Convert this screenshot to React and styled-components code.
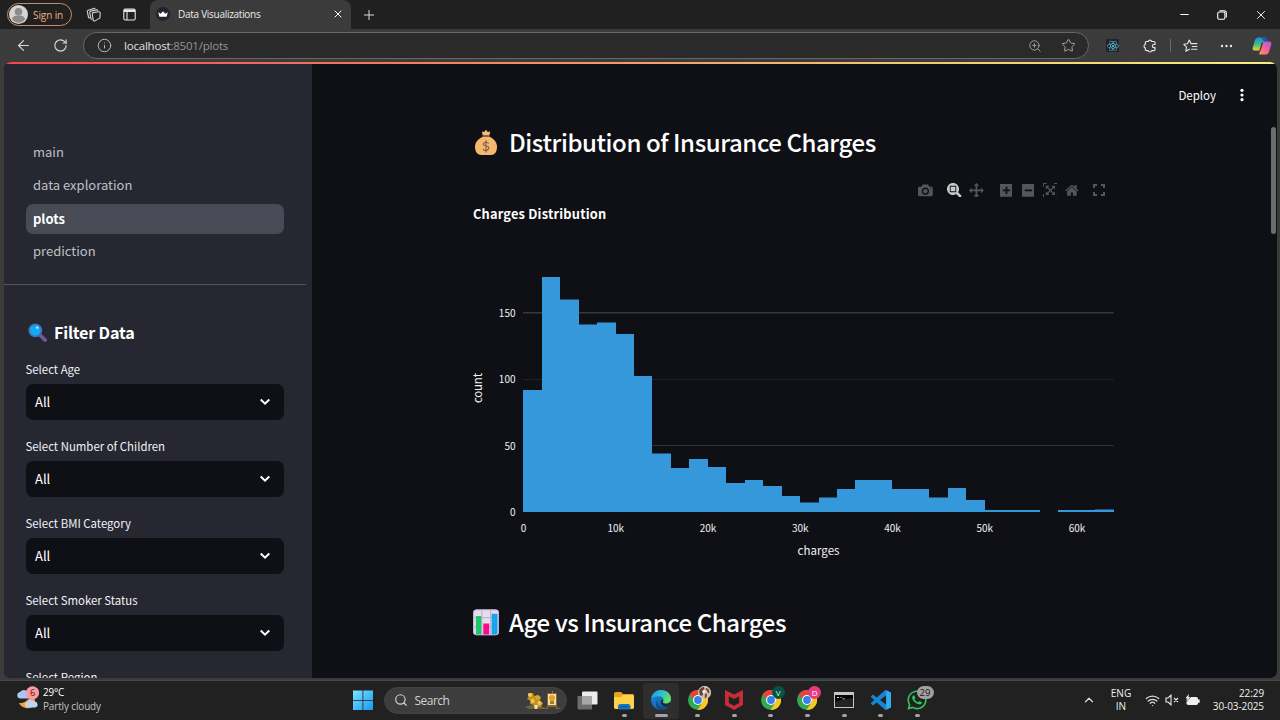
import React from "react";
import styled, { createGlobalStyle } from "styled-components";
import { ArrowLeft, RotateCw, Info, X, Plus, Minus, Star, ZoomIn, Search, ChevronUp, Wifi } from "lucide-react";
import { FaWhatsapp, FaReact } from "react-icons/fa";

const SOURCE = '"Noto Sans CJK JP", "Open Sans", sans-serif';
const SYSTEM = '"Open Sans", "Noto Sans", sans-serif';

const Global = createGlobalStyle`
  * { box-sizing: border-box; }
  body { margin: 0; background: #3b3b3b; overflow: hidden; }
  svg { display: block; flex: none; }
`;

const Screen = styled.div`
  width: 1280px;
  height: 720px;
  display: flex;
  flex-direction: column;
  overflow: hidden;
  background: #3b3b3b;
  font-family: ${SYSTEM};
  color: #fff;
`;

/* ---------- browser chrome ---------- */
const TabStrip = styled.header`
  height: 29px;
  flex: none;
  display: flex;
  align-items: center;
  background: #202020;
`;
const SignIn = styled.div`
  width: 65px;
  height: 23px;
  margin-left: 7px;
  padding-left: 1px;
  display: flex;
  align-items: center;
  gap: 5px;
  border: 1px solid #c78d62;
  border-radius: 12px;
  color: #f0ae80;
  font-size: 10px;
  line-height: 20px;
  letter-spacing: -0.1px;
  white-space: nowrap;
`;
const IconCell = styled.div`
  width: ${(p) => p.$w}px;
  height: 100%;
  flex: none;
  display: flex;
  align-items: center;
  justify-content: center;
  color: ${(p) => p.$color || "#d8d8d8"};
`;
const Tab = styled.div`
  width: 201px;
  height: 29px;
  margin-left: 3px;
  padding: 0 7px 1px 6px;
  display: flex;
  align-items: center;
  background: #3b3b3b;
  border-radius: 8px 8px 0 0;
  font-size: 10px;
`;
const TabTitle = styled.span`
  flex: 1;
  margin-left: 8px;
  letter-spacing: -0.28px;
  color: #ececec;
`;
const WindowButtons = styled.div`
  height: 100%;
  margin-left: auto;
  display: flex;
`;
const Toolbar = styled.div`
  height: 33px;
  flex: none;
  display: flex;
  align-items: center;
  background: #3b3b3b;
`;
const Address = styled.div`
  width: 1006px;
  height: 27px;
  margin-left: 9px;
  display: flex;
  align-items: center;
  background: #2a2a2a;
  border: 1px solid #686868;
  border-radius: 14px;
`;
const Url = styled.span`
  flex: 1;
  padding-bottom: 1px;
  font-size: 11.5px;
  letter-spacing: -0.2px;
  color: #e0e0e0;
  span { color: #959595; }
`;
const Separator = styled.i`
  width: 1px;
  height: 13px;
  background: #6a6a6a;
`;
const ReactTile = styled.span`
  width: 13px;
  height: 13px;
  display: flex;
  align-items: center;
  justify-content: center;
  background: #20242a;
`;

/* ---------- page ---------- */
const Page = styled.div`
  width: 1273px;
  height: 616px;
  margin-left: 4px;
  flex: none;
  display: flex;
  flex-direction: column;
  border-radius: 7px;
  overflow: hidden;
  background: #0f1016;
  font-family: ${SOURCE};
`;
const Rainbow = styled.div`
  height: 2px;
  flex: none;
  background: linear-gradient(90deg, #f2454f, #f58b62 40%, #f6c173 68%, #f7ee83);
`;
const Columns = styled.div`
  flex: 1;
  min-height: 0;
  display: flex;
`;
const Sidebar = styled.aside`
  width: 307.5px;
  flex: none;
  overflow: hidden;
  background: #262730;
`;
const Nav = styled.nav`
  padding: 74px 28px 0 21.5px;
  display: flex;
  flex-direction: column;
  gap: 3.5px;
`;
const NavItem = styled.a`
  height: 29.5px;
  padding-left: 7.5px;
  border-radius: 7px;
  line-height: ${(p) => (p.$active ? 29 : 28.4)}px;
  font-size: 13px;
  font-weight: ${(p) => (p.$active ? 700 : 400)};
  color: ${(p) => (p.$active ? "#fff" : "#bfc0c6")};
  background: ${(p) => (p.$active ? "#484a55" : "transparent")};
`;
const Divider = styled.hr`
  width: 302px;
  height: 1px;
  margin: 17.5px 0 0;
  border: 0;
  background: #53545d;
`;
const FilterTitle = styled.h2`
  height: 26px;
  margin: 34px 0 16px 24px;
  display: flex;
  align-items: center;
  gap: 7px;
  font-size: 16.2px;
  line-height: 26px;
  font-weight: 700;
  letter-spacing: -0.22px;
`;
const Field = styled.div`
  width: 258.5px;
  height: 77px;
  margin-left: 21.5px;
`;
const FieldLabel = styled.label`
  display: block;
  height: 23px;
  font-size: 11.4px;
  line-height: 17px;
  color: #f2f2f4;
`;
const Select = styled.div`
  height: 36px;
  padding: 0 13px 1px 9.5px;
  display: flex;
  align-items: center;
  justify-content: space-between;
  border-radius: 7px;
  background: #0f1016;
  font-size: 13px;
  line-height: 34px;
`;
const Main = styled.main`
  flex: 1;
  min-width: 0;
  padding-left: 161.5px;
`;
const AppHeader = styled.div`
  height: 62px;
  padding: 0 26px 1px 0;
  display: flex;
  align-items: center;
  justify-content: flex-end;
  gap: 23px;
  font-size: 11.5px;
`;
const Heading = styled.h1`
  height: 32px;
  margin: 0;
  display: flex;
  align-items: center;
  gap: 10px;
  font-size: 24px;
  line-height: 32px;
  font-weight: 500;
  letter-spacing: -0.42px;
  white-space: nowrap;
`;
const ModeBar = styled.div`
  width: 637px;
  height: 16px;
  margin-top: 24px;
  display: flex;
  justify-content: flex-end;
  align-items: center;
`;
const ModeGroup = styled.div`
  margin-left: 7.2px;
  display: flex;
  &:last-child { margin-left: 5px; }
`;
const ModeButton = styled.span`
  width: 22px;
  display: flex;
  justify-content: center;
  svg { fill: ${(p) => (p.$on ? "#c9cacc" : "#54565b")}; }
`;
const ChartTitle = styled.h3`
  height: 18px;
  margin: 7px 0 0;
  font-size: 12.8px;
  line-height: 18px;
  letter-spacing: 0.2px;
  font-weight: 700;
`;
const ChartBox = styled.div`
  height: 383px;
  padding-top: 16px;
`;
const ScrollTrack = styled.div`
  width: 6px;
  padding-top: 63px;
`;
const ScrollThumb = styled.div`
  width: 5px;
  height: 107px;
  border-radius: 3px;
  background: #6c6d70;
`;

/* ---------- taskbar ---------- */
const Taskbar = styled.footer`
  height: 40px;
  margin-top: 2px;
  flex: none;
  display: flex;
  align-items: center;
  background: #212121;
  border-top: 1px solid #474747;
`;
const Weather = styled.div`
  width: 345px;
  padding: 0 0 2px 16px;
  display: flex;
  gap: 4px;
`;
const WeatherText = styled.div`
  display: flex;
  flex-direction: column;
  font-size: 9.9px;
  line-height: 14px;
  letter-spacing: -0.1px;
  color: #c4c4c4;
`;
const Temperature = styled.span`
  height: 13px;
  line-height: 13px;
  color: #fff;
  letter-spacing: -0.2px;
`;
const SearchBox = styled.div`
  width: 183px;
  height: 27px;
  margin: 0 3px 1px 2px;
  padding: 0 5px 0 9px;
  display: flex;
  align-items: center;
  border-radius: 14px;
  background: #3d3d3d;
  border: 1px solid #434343;
  font-size: 12px;
  color: #d2d2d2;
  span { flex: 1; margin-left: 7px; letter-spacing: -0.55px; }
`;
const TaskApp = styled.div`
  position: relative;
  width: 36.6px;
  height: 36px;
  padding-bottom: 1px;
  display: flex;
  align-items: center;
  justify-content: center;
  border-radius: 4px;
  background: ${(p) => (p.$active ? "#2e2e2e" : "transparent")};
  &::after {
    content: "";
    display: ${(p) => (p.$idle ? "none" : "block")};
    position: absolute;
    bottom: 2px;
    width: ${(p) => (p.$active ? 13 : 5)}px;
    height: 2.5px;
    border-radius: 2px;
    background: #a3a3a3;
  }
`;
const Badge = styled.span`
  position: absolute;
  top: 3px;
  right: ${(p) => p.$right || 4.5}px;
  width: ${(p) => p.$w || 13}px;
  height: 13px;
  border-radius: 7px;
  background: ${(p) => p.$bg};
  color: ${(p) => p.$fg || "#fff"};
  font-size: ${(p) => p.$size || 8}px;
  line-height: 13px;
  text-align: center;
`;
const Tray = styled.div`
  height: 100%;
  margin-left: auto;
  padding-bottom: 1px;
  display: flex;
  align-items: center;
  color: #f0f0f0;
`;
const TrayText = styled.div`
  width: ${(p) => p.$w}px;
  text-align: ${(p) => p.$align};
  font-size: 10px;
  line-height: 13.5px;
  letter-spacing: ${(p) => p.$track || 0}px;
  white-space: nowrap;
`;

/* ---------- drawings ---------- */
const Avatar = () => (
  <svg width="19" height="19" viewBox="0 0 19 19">
    <circle cx="9.5" cy="9.5" r="9.5" fill="#d4d4d4" />
    <circle cx="9.5" cy="6.8" r="3.8" fill="#8b8b8b" />
    <path d="M3 14c1-3 3-3.500 6.500-3.500s5.500.5 6.500 3.500c-1.500 2.500-4 3.700-6.500 3.700S4.500 16.500 3 14z" fill="#8b8b8b" />
  </svg>
);
const Workspaces = () => (
  <svg width="16" height="16" viewBox="0 0 16 16" fill="none" stroke="#d4d4d4" strokeWidth="1.1" strokeLinejoin="round">
    <path d="M7.200 5.600 12.800 4.800q1.300-.1 1.400 1l-.2 4.500q-.1.800-.8 1.100L9 13.900q-1.600.5-1.800-.8L6.300 7q-.1-1.100.9-1.400z" />
    <path d="M6.300 12.200 5 12 3.700 5.700q-.1-1.200 1-1.600L10.300 2.900q1.200-.2 1.600.9" />
    <path d="M4 10.900 2.600 10.600 1.300 4.700Q1.100 3.600 2.200 3.200L7.700 1.400q1-.2 1.500.4" />
  </svg>
);
const TabPanel = () => (
  <svg width="13" height="13" viewBox="0 0 13 13" fill="none" stroke="#e8e8e8" strokeWidth="1.1">
    <rect x=".8" y="1" width="11.400" height="11" rx="1.500" />
    <path d="M1 2.700h11" strokeWidth="2.600" />
    <path d="M4 3v9" />
  </svg>
);
const CrownIcon = () => (
  <svg width="14" height="14" viewBox="0 0 14 14">
    <circle cx="7" cy="7" r="7" fill="#22232e" />
    <path d="M2.200 5.200 4.700 6.700 7 4.200l2.300 2.500 2.500-1.500-1.200 4.600H3.400z" fill="#fff" />
  </svg>
);
const Restore = () => (
  <svg width="10" height="10" viewBox="0 0 10 10" fill="none" stroke="#fff" strokeWidth="1.1">
    <rect x=".7" y="2" width="7.200" height="7.200" rx="1.500" />
    <path d="M2.500.7h4.700q2.100 0 2.100 2.100v4.700" />
  </svg>
);
const Puzzle = () => (
  <svg width="14" height="14" viewBox="0 0 14 14" fill="none" stroke="#e4e4e4" strokeWidth="1.200" strokeLinejoin="round">
    <path d="M3.500 2.500h1.800a1.700 1.700 0 0 1 3.300 0h2.200q1.200 0 1.200 1.200v1.800h-1a1.600 1.600 0 0 0 0 3.200h1v1.800q0 1.200-1.200 1.200H8.600a1.700 1.700 0 0 1-3.300 0H3.500q-1.200 0-1.200-1.200V8.800a1.700 1.700 0 0 1 0-3.300V3.700q0-1.200 1.200-1.200z" />
  </svg>
);
const Favorites = () => (
  <svg width="15" height="14" viewBox="0 0 15 14" fill="none" stroke="#e4e4e4" strokeWidth="1.100" strokeLinejoin="round" strokeLinecap="round">
    <path d="M8 4.600 6.300 1 4.500 4.800.8 5.300l2.700 2.800-.7 4.100 3.600-2M8 4.600h6M9.300 7.500H14M8.500 10.300H14" />
  </svg>
);
const Copilot = () => (
  <svg width="20" height="18" viewBox="0 0 20 18">
    <defs>
      <linearGradient id="cpA" x1="0" y1="0" x2="0" y2="1"><stop stopColor="#2289e8" /><stop offset=".5" stopColor="#35bd86" /><stop offset="1" stopColor="#f1cf2e" /></linearGradient>
      <linearGradient id="cpB" x1="1" y1="0" x2="0" y2="1"><stop stopColor="#a557e8" /><stop offset=".5" stopColor="#f45f9d" /><stop offset="1" stopColor="#ff9a45" /></linearGradient>
    </defs>
    <path d="M6 .5h7L9.500 11.500q-.8 2-2.500 2H2.500Q0 13.500.8 10.500L3 3Q3.800.5 6 .5z" fill="url(#cpA)" />
    <path d="M9 .5h4q2 0 2.500 2.500l.5 1.500h-4z" fill="#1b56bd" />
    <path d="M13 4.500h4.500q2.500 0 1.700 3L17 15q-.8 2.500-3 2.500H7L10.500 6.500q.8-2 2.500-2z" fill="url(#cpB)" />
    <path d="M10.500 5.500 8 13.500" stroke="#3b3b3b" strokeWidth="1.400" />
  </svg>
);
const Magnifier = () => (
  <svg width="19" height="19" viewBox="0 0 19 19">
    <path d="m12 12 5 5" stroke="#6d5c9c" strokeWidth="3.800" strokeLinecap="round" />
    <circle cx="7.300" cy="7.300" r="6.100" fill="#12a8f3" stroke="#3f73ba" strokeWidth="1.600" />
    <path d="M9.300 3.200v3M8.200 4.700h2.200" stroke="#d7f4ff" strokeWidth="1" />
  </svg>
);
const SelectArrow = () => (
  <svg width="12" height="8" viewBox="0 0 12 8" fill="none" stroke="#fff" strokeWidth="2">
    <path d="M1.700 1.500 6 5.700l4.300-4.200" />
  </svg>
);
const KebabIcon = () => (
  <svg width="6" height="14" viewBox="0 0 6 14" fill="#fff">
    <circle cx="3" cy="2.300" r="1.600" /><circle cx="3" cy="7" r="1.600" /><circle cx="3" cy="11.700" r="1.600" />
  </svg>
);
const MoneyBag = () => (
  <svg width="26" height="27" viewBox="0.500 0 26 27">
    <path d="M9.300 2.500 11.700 3 13.500.8 15.300 3l2.500-.5L16.800 6.500h-6.500z" fill="#f6bd73" />
    <path d="M10 6.200h7.200v2.200H10z" fill="#83604b" />
    <path d="M10 8h7.500c4 1.800 7 5.500 7 10 0 5-2.500 8-6 8H9c-3.800 0-6.500-3-6.500-8 0-4.500 3-8.200 7.500-10z" fill="#f5b96d" />
    <path d="M16.200 14.500q-1-1.500-2.700-1.500t-2.500 1.700 2.500 2.300 2.700 2.500-2.700 2.100-2.800-1.600M13.500 11.500v12" fill="none" stroke="#83604b" strokeWidth="1.200" />
  </svg>
);
const BarsEmoji = () => (
  <svg width="26" height="27" viewBox="0 0 26.500 27">
    <defs><clipPath id="barsClip"><rect x=".3" y=".3" width="26" height="26" rx="3" /></clipPath></defs>
    <g clipPath="url(#barsClip)">
      <path fill="#e5dcef" d="M0 0h27v27H0z" />
      <path d="M9 0v27M18 0v27M0 8.500h27M0 18h27" stroke="#b9a9cb" strokeWidth="1" />
      <path fill="#18c766" d="M3 7h5.500v20H3z" />
      <path fill="#f50c87" d="M10.500 14.500h6V27h-6z" />
      <path fill="#18a4ee" d="M19 4.500h6V27h-6z" />
    </g>
    <rect x=".6" y=".6" width="25.500" height="25.500" rx="3" fill="none" stroke="#c4b5d4" />
  </svg>
);

const PLOT_ICONS = {
  camera: [1000, "m500 450c-83 0-150-67-150-150 0-83 67-150 150-150 83 0 150 67 150 150 0 83-67 150-150 150z m400 150h-120c-16 0-34 13-39 29l-31 93c-6 15-23 28-40 28h-340c-16 0-34-13-39-28l-31-94c-6-15-23-28-40-28h-120c-55 0-100-45-100-100v-450c0-55 45-100 100-100h800c55 0 100 45 100 100v450c0 55-45 100-100 100z m-400-550c-138 0-250 112-250 250 0 138 112 250 250 250 138 0 250-112 250-250 0-138-112-250-250-250z m365 380c-19 0-35 16-35 35 0 19 16 35 35 35 19 0 35-16 35-35 0-19-16-35-35-35z"],
  zoom: [1000, "m1000-25l-250 251c40 63 63 138 63 218 0 224-182 406-407 406-224 0-406-182-406-406s183-406 407-406c80 0 155 22 218 62l250-250 125 125z m-812 250l0 438 437 0 0-438-437 0z m62 375l313 0 0-312-313 0 0 312z"],
  pan: [1000, "m1000 350l-187 188 0-125-250 0 0 250 125 0-188 187-187-187 125 0 0-250-250 0 0 125-188-188 186-187 0 125 252 0 0-250-125 0 187-188 188 188-125 0 0 250 250 0 0-126 187 188z"],
  plus: [875, "m1 787l0-875 875 0 0 875-875 0z m687-500l-187 0 0-187-125 0 0 187-188 0 0 125 188 0 0 187 125 0 0-187 187 0 0-125z"],
  minus: [875, "m0 788l0-876 875 0 0 876-875 0z m688-500l-500 0 0 125 500 0 0-125z"],
  autoscale: [1000, "m250 850l-187 0-63 0 0-62 0-188 63 0 0 188 187 0 0 62z m688 0l-188 0 0-62 188 0 0-188 62 0 0 188 0 62-62 0z m-875-938l0 188-63 0 0-188 0-62 63 0 187 0 0 62-187 0z m875 188l0-188-188 0 0-62 188 0 62 0 0 62 0 188-62 0z m-125 188l-1 0-93-94-156 156 156 156 92-93 2 0 0 250-250 0 0-2 93-92-156-156-156 156 94 92 0 2-250 0 0-250 0 0 93 93 157-156-157-156-93 94 0 0 0-250 250 0 0 0-94 93 156 157 156-157-93-93 0 0 250 0 0 250z"],
  home: [928, "m786 296v-267q0-15-11-26t-25-10h-214v214h-143v-214h-214q-15 0-25 10t-11 26v267q0 1 0 2t0 2l321 264 321-264q1-1 1-4z m124 39l-34-41q-5-5-12-6h-2q-7 0-12 3l-386 322-386-322q-7-4-13-4-7 2-12 7l-35 41q-4 5-3 13t6 12l401 334q18 15 42 15t43-15l136-114v109q0 8 5 13t13 5h107q8 0 13-5t5-13v-227l122-102q5-5 6-12t-4-13z"],
};
const PlotIcon = ({ name }) => {
  const [w, d] = PLOT_ICONS[name];
  return (
    <svg width={w * 0.0148} height="14.8" viewBox={`0 0 ${w} 1000`}>
      <path transform="matrix(1 0 0 -1 0 850)" d={d} />
    </svg>
  );
};
const Fullscreen = () => (
  <svg width="12" height="12" viewBox="0 0 12 12">
    <path d="M0 0h4v2H2v2H0zM8 0h4v4h-2V2H8zM0 8h2v2h2v2H0zM10 8h2v4H8v-2h2z" />
  </svg>
);

const counts = [92, 177, 160, 141, 142.5, 134, 102.5, 44, 33, 40, 34, 22, 24, 19.5, 12, 7, 11, 17.5, 24, 24, 17.5, 17.5, 11, 18, 9, 1.5, 1.5, 1.5, 0, 1.5, 1.5, 2];
const X0 = 50, STEP = 18.45, Y0 = 273, UNIT = 1.3285;

const Histogram = () => {
  let path = `M${X0} ${Y0}`;
  counts.forEach((c, i) => {
    const y = Math.round((Y0 - c * UNIT) * 2) / 2;
    path += `V${y}H${Math.round(X0 + 0.3 + STEP * (i + 1)) - 0.5 + 0.5}`;
  });
  path += `V${Y0}z`;
  return (
    <svg width="660" height="330" viewBox="0 0 660 330" fill="#f0f1f3" fontFamily={SOURCE} fontSize="10">
      <path d="M50 73.800H640.500" stroke="#37383e" strokeWidth="1.600" />
      <path d="M50 140.500H640.500" stroke="#222328" />
      <path d="M50 206.500H640.500" stroke="#303138" />
      <path d={path} fill="#3598db" />
      <g textAnchor="end">
        <text x="42.500" y="78">150</text>
        <text x="42.500" y="144">100</text>
        <text x="42.500" y="210.500">50</text>
        <text x="42.500" y="277">0</text>
      </g>
      <g textAnchor="middle">
        {["0", "10k", "20k", "30k", "40k", "50k", "60k"].map((t, i) => (
          <text key={t} x={50.5 + i * 92.25} y="292.500">{t}</text>
        ))}
        <text x="345.500" y="315.500" fontSize="11.500" textLength="42">charges</text>
        <text transform="translate(8.500 149) rotate(-90)" fontSize="11.500" textLength="30">count</text>
      </g>
    </svg>
  );
};

const WeatherIcon = () => (
  <svg width="23" height="24" viewBox="0 0 23 24">
    <path d="M14 8.500c4 2.500 6 5.500 5 9-1.500 4-5.500 5.500-9.500 4.500-3-.5-5.500-2.500-6.500-5 5 .5 10-2.500 11-8.500z" fill="#f6a02d" />
    <path d="M4 12.500a3.300 3.300 0 0 1 0-6.500 5 5 0 0 1 8 0v6.500z" fill="#a9c7f2" />
    <path d="M11 21.500a2.800 2.800 0 0 1 0-5.500 4 4 0 0 1 7-.5 3 3 0 1 1 1 6z" fill="#bcd6fa" />
    <circle cx="16.500" cy="6.800" r="6.600" fill="#ff97a2" />
    <text x="16.500" y="10" fontSize="9" textAnchor="middle" fill="#3a2024">6</text>
  </svg>
);
const WindowsLogo = () => (
  <svg width="20" height="20" viewBox="0 0 20 20">
    <defs><linearGradient id="win" x2="1" y2="1"><stop stopColor="#7fe2fd" /><stop offset="1" stopColor="#139af3" /></linearGradient></defs>
    <path fill="url(#win)" d="M0 .5h9.500V10H0zM10.300.5H20V10h-9.700zM0 10.800h9.500V20H0zM10.300 10.800H20V20h-9.700z" />
  </svg>
);
const SearchArt = () => (
  <svg width="36" height="19" viewBox="0 0 36 19">
    <path d="M0 16q9-4 18 0t18 0l-2 2H4z" fill="#6e6530" />
    <path d="M3 2h5l1 3 4-1 3 2-1 4 3 2-2 4h-3l-1 2h-2l-1-4-4-1 1-3-4-2 2-3z" fill="#c49020" />
    <circle cx="5" cy="4" r="2" fill="#f5ca4c" /><circle cx="12.500" cy="6.500" r="2.200" fill="#d5a731" />
    <circle cx="7.500" cy="10" r="2.200" fill="#efc246" /><circle cx="14.500" cy="12" r="2" fill="#f4c84a" />
    <path d="M9 14h4l-.8 4h-2.400z" fill="#ece0b1" />
    <path d="M22 2h10v14H22z" fill="#8d6530" /><path d="M23 3h8v11h-8z" fill="#efe0ae" />
    <circle cx="27" cy="7" r="3" fill="#e0a51f" /><path d="M25 10h4v3h-4z" fill="#a67925" />
    <path d="M26.500 0h1v2M22.500 16l-1 2M31.500 16l1 2" stroke="#9d743b" />
  </svg>
);
const TaskView = () => (
  <svg width="21" height="19" viewBox="0 0 21 19">
    <rect x="5" y=".5" width="15.500" height="13" rx="1" fill="#ececec" />
    <rect x=".5" y="5" width="14.500" height="13.500" rx="1" fill="#777" fillOpacity=".88" />
    <path d="M5 5h10v8.500H5z" fill="#a7a7a7" />
  </svg>
);
const Folder = () => (
  <svg width="20" height="19" viewBox="0 0 20 19">
    <path d="M0 3q0-2 2-2h5l2 2h10q1 0 1 2v11q0 2-2 2H2q-2 0-2-2z" fill="#e4a51d" />
    <path d="M0 6h7l2-2h9q2 0 2 2v10q0 2-2 2H2q-2 0-2-2z" fill="#ffd04a" />
    <path d="M4 18.500v-3q0-2.500 2.500-2.500h7.500q2.500 0 2.500 2.500v3z" fill="#1375c4" />
    <path d="M6.500 15.800h7.500" stroke="#0d4f92" strokeWidth="1.200" />
  </svg>
);
const EdgeLogo = () => (
  <svg width="20" height="20" viewBox="0 0 20 20">
    <defs>
      <linearGradient id="eg1" x1="0" x2="1" y2=".5"><stop stopColor="#2295dc" /><stop offset=".55" stopColor="#31bfcf" /><stop offset="1" stopColor="#68df58" /></linearGradient>
      <linearGradient id="eg2" x1="0" x2=".8" y2="1"><stop stopColor="#1b8fdd" /><stop offset="1" stopColor="#0c59a4" /></linearGradient>
    </defs>
    <circle cx="10" cy="10" r="10" fill="url(#eg2)" />
    <path d="M.2 8.500C1 3.500 5 0 10 0c6 0 10 4 10 8.700 0 3-2 5-5 5-2 0-3.700-.7-3-2 1.300-2.500 0-5.200-3.700-5.500C4.500 6 1.500 7 .2 8.500z" fill="url(#eg1)" />
    <path d="M7 9c-2 3 0 7.500 4.500 8.300 3 .5 5.500-.3 7-1.800-2 3.500-5.500 4.700-8.500 4.500C5 19.500 3.500 13 7 9z" fill="#124a8b" />
    <path d="M12 11.700c-.7 1.300 1 2 3 2q2.500 0 4.300-2c0 2-.5 3.500-1.500 4.500-4 1.500-8-.5-8-3.700 0-1.500.7-2.500 1.700-3 .9.600 1 1.500.5 2.200z" fill="#212b35" />
  </svg>
);
const ChromeLogo = () => (
  <svg width="20" height="20" viewBox="0 0 20 20">
    <circle cx="10" cy="10" r="10" fill="#32a952" />
    <path d="M10 0a10 10 0 0 1 8.700 5H10a5 5 0 0 0-4.700 3.300L1.300 5A10 10 0 0 1 10 0z" fill="#e6443a" />
    <path d="M18.700 5A10 10 0 0 1 9.500 20l4.800-7.500A5 5 0 0 0 10 5z" fill="#fbc622" />
    <circle cx="10" cy="10" r="5" fill="#fff" /><circle cx="10" cy="10" r="3.900" fill="#3a7fee" />
  </svg>
);
const McAfee = () => (
  <svg width="18" height="20" viewBox="0 0 18 20">
    <path d="m0 0 9 4.500L18 0v15l-9 5-9-5zM3.800 6.200v6.700L9 15.800l5.200-2.900V6.200L9 8.900z" fill="#c52e35" fillRule="evenodd" />
  </svg>
);
const Terminal = () => (
  <svg width="20" height="16" viewBox="0 0 20 16">
    <path fill="#c6c6c6" d="M0 0h20v16H0z" /><path fill="#050505" d="M1 3h18v12H1z" />
    <path d="M3 5.500h2M6.500 5.500h1M8.500 7h2.500" stroke="#ddd" strokeWidth="1" />
    <path d="M1 10Q9 7 19 6v9H1z" fill="#232323" />
  </svg>
);
const VSCode = () => (
  <svg width="20" height="20" viewBox="0 0 24 24">
    <path fill="#1687d4" d="M23.15 2.587L18.21.21a1.494 1.494 0 0 0-1.705.29l-9.46 8.63-4.12-3.128a.999.999 0 0 0-1.276.057L.327 7.261A1 1 0 0 0 .326 8.74L3.899 12 .326 15.26a1 1 0 0 0 .001 1.479L1.65 17.94a.999.999 0 0 0 1.276.057l4.12-3.128 9.46 8.63a1.492 1.492 0 0 0 1.704.29l4.942-2.377A1.5 1.5 0 0 0 24 20.06V3.939a1.5 1.5 0 0 0-.85-1.352zm-5.146 14.861L10.826 12l7.178-5.448v10.896z" />
    <path fill="#35a8f1" d="m18.200.2 4.950 2.387q.85.450.85 1.352V20.060q0 .9-.85 1.350L18.200 23.800z" />
  </svg>
);
const MuteIcon = () => (
  <svg width="14" height="12" viewBox="0 0 14 12" fill="none" stroke="#ececec" strokeWidth="1.100">
    <path d="M1 4h2l3-2.800v9.600L3 8H1zM9 4l4 4M13 4 9 8" />
  </svg>
);
const BatteryIcon = () => (
  <svg width="15" height="13" viewBox="0 0 15 13">
    <rect x="1.500" y="3" width="11.500" height="8" rx="1.800" fill="#f0f0f0" />
    <path fill="#f0f0f0" d="M13 5.500h1.700v3.200H13z" />
    <path d="M3.800 0 .5 4.200h2L1.800 7.500 5.500 3.300h-2z" fill="#f0f0f0" stroke="#212121" strokeWidth=".9" paintOrder="stroke" />
  </svg>
);
const PhotoBadge = () => (
  <svg width="13" height="13" viewBox="0 0 13 13">
    <circle cx="6.500" cy="6.500" r="6.500" fill="#d4c1ac" />
    <path d="M1.500 3.500q2-3 4.500-2.500l.5 2-2 2 .5 4-2 1Q.5 8 1.500 3.500zM8 2l2.500 1 1 3.500-1.500 1-1-3-1.500-1zM7 7.500l2 .5-.5 3.500-1.800.5z" fill="#64443c" />
    <circle cx="6" cy="5.500" r="1.500" fill="#f7eee4" />
  </svg>
);

const filters = ["Select Age", "Select Number of Children", "Select BMI Category", "Select Smoker Status", "Select Region"];

export default function App() {
  return (
    <Screen>
      <Global />
      <TabStrip>
        <SignIn><Avatar />Sign in</SignIn>
        <IconCell $w={44}><Workspaces /></IconCell>
        <IconCell $w={26}><TabPanel /></IconCell>
        <IconCell $w={5} />
        <Tab>
          <CrownIcon />
          <TabTitle>Data Visualizations</TabTitle>
          <X size={12} strokeWidth={2} />
        </Tab>
        <IconCell $w={36}><Plus size={16} strokeWidth={1.5} /></IconCell>
        <WindowButtons>
          <IconCell $w={38} $color="#fff"><Minus size={13} strokeWidth={1.8} /></IconCell>
          <IconCell $w={38}><Restore /></IconCell>
          <IconCell $w={39} $color="#eee"><X size={14} strokeWidth={1.7} /></IconCell>
        </WindowButtons>
      </TabStrip>
      <Toolbar>
        <IconCell $w={46}><ArrowLeft size={17} strokeWidth={1.6} /></IconCell>
        <IconCell $w={28}><RotateCw size={15} strokeWidth={1.8} /></IconCell>
        <Address>
          <IconCell $w={40} $color="#b9b9b9"><Info size={15} strokeWidth={1.6} /></IconCell>
          <Url>localhost<span>:8501/plots</span></Url>
          <IconCell $w={34} $color="#a6a6a6"><ZoomIn size={14} strokeWidth={1.6} /></IconCell>
          <IconCell $w={33} $color="#a6a6a6"><Star size={15} strokeWidth={1.6} /></IconCell>
          <IconCell $w={3} />
        </Address>
        <IconCell $w={47} $color="#5fc4de"><ReactTile><FaReact size={12} /></ReactTile></IconCell>
        <IconCell $w={28}><Puzzle /></IconCell>
        <IconCell $w={13}><Separator /></IconCell>
        <IconCell $w={26}><Favorites /></IconCell>
        <IconCell $w={46}>
          <svg width="13" height="4" viewBox="0 0 13 4" fill="#e8e8e8"><circle cx="2" cy="2" r="1.200" /><circle cx="6.500" cy="2" r="1.200" /><circle cx="11" cy="2" r="1.200" /></svg>
        </IconCell>
        <IconCell $w={25}><Copilot /></IconCell>
      </Toolbar>

      <Page>
        <Rainbow />
        <Columns>
          <Sidebar>
            <Nav>
              <NavItem>main</NavItem>
              <NavItem>data exploration</NavItem>
              <NavItem $active>plots</NavItem>
              <NavItem>prediction</NavItem>
            </Nav>
            <Divider />
            <FilterTitle><Magnifier />Filter Data</FilterTitle>
            {filters.map((name) => (
              <Field key={name}>
                <FieldLabel>{name}</FieldLabel>
                <Select>All<SelectArrow /></Select>
              </Field>
            ))}
          </Sidebar>
          <Main>
            <AppHeader>Deploy<KebabIcon /></AppHeader>
            <Heading><MoneyBag />Distribution of Insurance Charges</Heading>
            <ModeBar>
              <ModeGroup><ModeButton><PlotIcon name="camera" /></ModeButton></ModeGroup>
              <ModeGroup>
                <ModeButton $on><PlotIcon name="zoom" /></ModeButton>
                <ModeButton><PlotIcon name="pan" /></ModeButton>
              </ModeGroup>
              <ModeGroup>
                <ModeButton><PlotIcon name="plus" /></ModeButton>
                <ModeButton><PlotIcon name="minus" /></ModeButton>
                <ModeButton><PlotIcon name="autoscale" /></ModeButton>
                <ModeButton><PlotIcon name="home" /></ModeButton>
              </ModeGroup>
              <ModeGroup><ModeButton><Fullscreen /></ModeButton></ModeGroup>
            </ModeBar>
            <ChartTitle>Charges Distribution</ChartTitle>
            <ChartBox><Histogram /></ChartBox>
            <Heading><BarsEmoji />Age vs Insurance Charges</Heading>
          </Main>
          <ScrollTrack><ScrollThumb /></ScrollTrack>
        </Columns>
      </Page>

      <Taskbar>
        <Weather>
          <WeatherIcon />
          <WeatherText><Temperature>29°C</Temperature>Partly cloudy</WeatherText>
        </Weather>
        <TaskApp $idle><WindowsLogo /></TaskApp>
        <SearchBox><Search size={14} strokeWidth={2} /><span>Search</span><SearchArt /></SearchBox>
        <TaskApp $idle><TaskView /></TaskApp>
        <TaskApp><Folder /></TaskApp>
        <TaskApp $active><EdgeLogo /></TaskApp>
        <TaskApp><ChromeLogo /><Badge $bg="#d4c1ac"><PhotoBadge /></Badge></TaskApp>
        <TaskApp><McAfee /></TaskApp>
        <TaskApp><ChromeLogo /><Badge $bg="#075343" $fg="#d3eee8">V</Badge></TaskApp>
        <TaskApp><ChromeLogo /><Badge $bg="#e63b83">D</Badge></TaskApp>
        <TaskApp><Terminal /></TaskApp>
        <TaskApp><VSCode /></TaskApp>
        <TaskApp><FaWhatsapp size={22} color="#2dc65b" /><Badge $bg="#a0a0a0" $fg="#181818" $w={17} $size={9.5} $right={2}>29</Badge></TaskApp>
        <Tray>
          <IconCell $w={24}><ChevronUp size={14} strokeWidth={2.2} /></IconCell>
          <TrayText $w={40} $align="center">ENG<br />IN</TrayText>
          <IconCell $w={22}><Wifi size={15} strokeWidth={2} /></IconCell>
          <IconCell $w={18}><MuteIcon /></IconCell>
          <IconCell $w={22}><BatteryIcon /></IconCell>
          <TrayText $w={61} $align="right" $track={-0.1}>22:29<br />30-03-2025</TrayText>
          <IconCell $w={16} />
        </Tray>
      </Taskbar>
    </Screen>
  );
}
